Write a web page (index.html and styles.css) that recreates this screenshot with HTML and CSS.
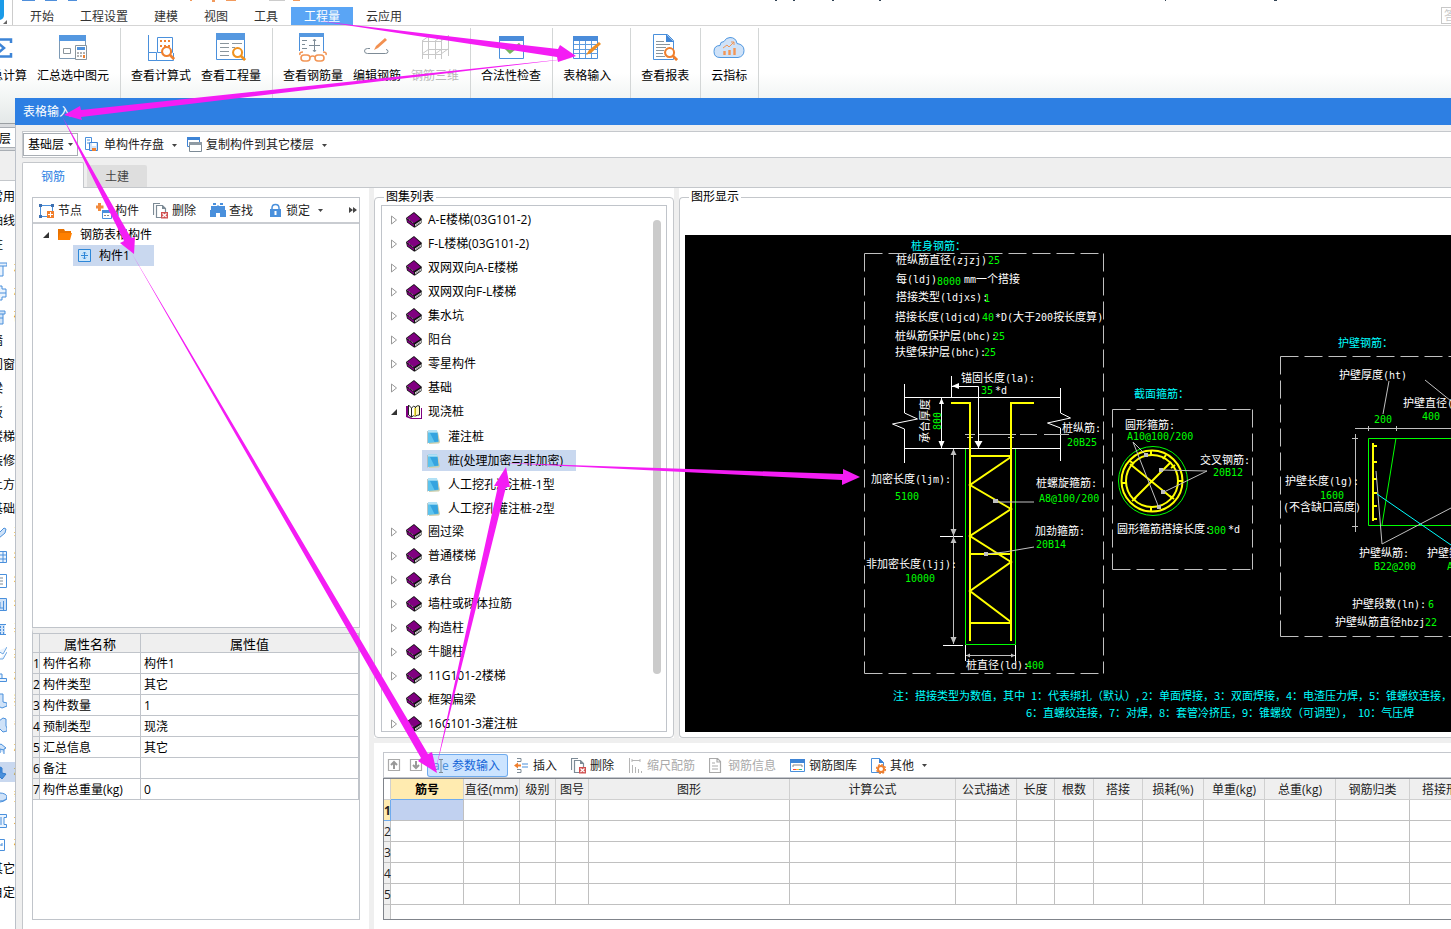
FILE: index.html
```html
<!DOCTYPE html>
<html lang="zh-CN">
<head>
  <meta charset="UTF-8">
  <meta name="viewport" content="width=device-width, initial-scale=1.0">
  <title>表格输入</title>
  <link rel="stylesheet" href="styles.css">
</head>
<body>
  <!-- Shared icons -->
  <svg class="defs" width="0" height="0" aria-hidden="true">
    <symbol id="i-book" viewBox="0 0 16 16">
      <path d="M0 6L8 0l8 7-.5 1v3L9 15.500H8L1 10.500z" fill="#111"/>
      <path d="M1 6l7-5 6.500 6L8 11z" fill="#800080"/>
      <path d="M1 7.500l7 5v2L1.500 10z" fill="#800080"/>
      <path d="M9 12.500L15 8.500v2l-6 4z" fill="#f2f2f2"/>
      <path d="M1.500 6.500L8 11.500" stroke="#e0b0e0" stroke-width=".8" stroke-dasharray="1 1" fill="none"/>
      <path d="M9.500 13.500l5-3.500" stroke="#555" stroke-width=".7" fill="none"/>
    </symbol>
    <symbol id="i-open" viewBox="0 0 16 16">
      <path d="M0 2h2v10l4 2h9V4h1v11H5l-5-2z" fill="#800080"/>
      <path d="M2.500 1l3 3v9l-3-2z" fill="#fff" stroke="#222"/>
      <path d="M5.500 4q2-3 4-1v9q-2-1-4 1z" fill="#fff" stroke="#222"/>
      <path d="M9.500 3q2-2 4-1v9q-2 0-4 1z" fill="#fffbc0" stroke="#222"/>
      <path d="M9 4v8" stroke="#f5e020" stroke-width="1.500"/>
    </symbol>
    <symbol id="i-page" viewBox="0 0 16 16">
      <path d="M3 3h9l2 10-1 1.500L3 15z" fill="#cfcfae"/>
      <path d="M2 1.500h9l1.500 11.500-10.500 1z" fill="#5cc3ee"/>
      <path d="M4 4h7.500l1 8.500-4 .5z" fill="#35a4df"/>
      <path d="M2 1.500h9l.5 2H2z" fill="#b4e2f5"/>
      <path d="M1.500 2v12.500" stroke="#a8b8b8" stroke-width=".8"/>
    </symbol>
    <symbol id="i-shut" viewBox="0 0 8 10"><path d="M1.500 1v8l5-4z" fill="#fff" stroke="#999"/></symbol>
    <symbol id="i-expand" viewBox="0 0 8 10"><path d="M7 2v6H1z" fill="#333"/></symbol>
    <symbol id="i-caret" viewBox="0 0 7 5"><path d="M1 1h5L3.500 4z" fill="#444"/></symbol>
    <symbol id="i-delete" viewBox="0 0 16 16">
      <path d="M.5 12V.5H7" fill="none" stroke="#7d8b96" stroke-width="1.200"/>
      <path d="M3.500 2.500h6l3 3V14.500h-9z" fill="#fff" stroke="#7d8b96" stroke-width="1.200"/>
      <path d="M9 2v4h4z" fill="#7d8b96"/>
      <path d="M8 9h7v6.500H8z" fill="#d05050"/>
      <path d="M9.500 10.500l4 3.500m0-3.500l-4 3.500" stroke="#fff" stroke-width="1.200"/>
    </symbol>
    <symbol id="i-magnify" viewBox="0 0 16 16">
      <path d="M10 10l5 5" stroke="currentColor" stroke-width="3"/>
      <circle cx="7" cy="7" r="4.800" fill="#fff" stroke="currentColor" stroke-width="2.200"/>
    </symbol>
    <symbol id="i-arrow-up" viewBox="0 0 16 16">
      <path d="M2.500 2.500h11v11h-11z" fill="none" stroke="#aaa" stroke-width="1.200"/>
      <path d="M8 12V5M5 8l3-3 3 3" fill="none" stroke="#999" stroke-width="2"/>
    </symbol>
  </svg>

  <!-- Ribbon tabs -->
  <header class="topbar">
    <svg class="quick" width="1300" height="26" aria-hidden="true">
      <path d="M0 0h4v15q0 4-4 5z" fill="#1b9be8"/>
      <path d="M7 20v4H3z" fill="#666"/>
      <path d="M12.500 0v25" stroke="#ccc"/>
      <path d="M22 0h13v1H22zM45 0h12v1H45zM68 0h9v1h-9z" fill="#4f8fdb"/>
      <path d="M190 0h2v1h-2zM212 0h3v2h-3zM226 0h10v1h-10zM293 0h7v1h-7z" fill="#f29a5c"/>
      <path d="M269 0h16v1h-16z" fill="#ccc"/>
      <path d="M775 0h2v1h-2zM793 0h2v1h-2zM832 0h2v1h-2zM879 0h2v1h-2zM1165 0h1v1h-1zM1274 0h3v1h-3z" fill="#345"/>
    </svg>
    <nav class="menu">
      <a href="#">开始</a>
      <a href="#">工程设置</a>
      <a href="#">建模</a>
      <a href="#">视图</a>
      <a href="#">工具</a>
      <a href="#" class="active">工程量</a>
      <a href="#">云应用</a>
    </nav>
    <input class="help-search" type="text" placeholder="答疑" aria-label="答疑">
  </header>

  <!-- Ribbon buttons -->
  <div class="ribbon">
    <div class="group first">
      <button class="tool">
        <svg width="32" height="32" viewBox="0 0 32 32"><path d="M24 12V8.500H7l10 8.500-10 8.500h17V22" fill="none" stroke="#3d84d6" stroke-width="2.500"/></svg>
        汇总计算
      </button>
      <button class="tool">
        <svg width="32" height="32" viewBox="0 0 32 32">
          <path d="M2.500 4.500h26v23h-26z" fill="#fff" stroke="#7d9ab5"/><path d="M2 4h27v6H2z" fill="#5598e0"/>
          <path d="M6.500 17.500h7v5h-7z" fill="none" stroke="#8a959c"/>
          <path d="M18.500 14.500h11v14h-11z" fill="#fff" stroke="#8a959c"/><path d="M20 16h8v3h-8z" fill="#4f92dc"/>
          <path d="M20 22h8M20 25h8" stroke="#666" stroke-dasharray="2 1"/><path d="M26 24h2v3h-2z" fill="#ee8030"/>
        </svg>
        汇总选中图元
      </button>
    </div>
    <div class="group">
      <button class="tool">
        <svg width="32" height="32" viewBox="0 0 32 32">
          <path d="M3.500 4v25.500h25V22" fill="none" stroke="#4a90dc"/><path d="M3.500 21.500h8v8h-8z" fill="#fff" stroke="#4a90dc"/>
          <path d="M12.500 6.500h15v15h-15z" fill="#fff" stroke="#4a90dc"/><path d="M15 10h11M15 15h11" stroke="#f08030" stroke-width="2" stroke-dasharray="2 2"/>
          <use href="#i-magnify" x="15" y="14" width="15" height="15" color="#f07f2d"/>
        </svg>
        查看计算式
      </button>
      <button class="tool">
        <svg width="32" height="32" viewBox="0 0 32 32">
          <path d="M1.500 2.500h28v26h-28z" fill="#fff" stroke="#4a90dc"/><path d="M1 2h29v7H1z" fill="#5598e0"/>
          <path d="M5 12.500h9M5 16.500h9M5 20.500h9M5 24.500h9M17 12.500h10M17 16.500h3" stroke="#8a959c"/>
          <use href="#i-magnify" x="16" y="15" width="15" height="15" color="#f0921e"/>
        </svg>
        查看工程量
      </button>
    </div>
    <div class="group">
      <button class="tool">
        <svg width="32" height="32" viewBox="0 0 32 32">
          <path d="M2.500 20V2.500h24V20" fill="#fff" stroke="#4a90dc"/><path d="M2 2h25v4H2z" fill="#5598e0"/>
          <path d="M5 9.500h5M5 13.500h3M5 17.500h5M17.500 9v11M12 14.500h11M16 10l1.500-2 1.500 2M16 19l1.500 2 1.500-2" fill="none" stroke="#7d8b96"/>
          <path d="M3 24q-1-3 3-3M29 24q1-3-3-3" fill="none" stroke="#f29555" stroke-width="1.600"/>
          <rect x="4" y="24" width="9" height="6" rx="3" fill="#fff" stroke="#f29555" stroke-width="1.600"/><rect x="18" y="24" width="9" height="6" rx="3" fill="#fff" stroke="#f29555" stroke-width="1.600"/>
          <path d="M13 26q3-2 5 0" fill="none" stroke="#f29555" stroke-width="1.600"/>
        </svg>
        查看钢筋量
      </button>
      <button class="tool">
        <svg width="32" height="32" viewBox="0 0 32 32">
          <path d="M9 17.500H6.500q-3 0-3 2.500t3 2.500h18q2.500 0 2.500-2t-2-2" fill="none" stroke="#7d8b96"/>
          <path d="M13 19l2-4 9-8 2 2-9 8z" fill="#f29050"/>
        </svg>
        编辑钢筋
      </button>
      <button class="tool" disabled>
        <svg width="32" height="32" viewBox="0 0 32 32">
          <path d="M3.500 28V10M9.500 28V6M16.500 28V10M22.500 28V6M29.500 25V4M3 10.500h20M10 5.500h20M3 23.500h20M10 18.500h20M3 10l7-5M16 10l7-5M22 10l7-5M3 23l7-5M16 23l7-5M22 23l7-5" fill="none" stroke="#c8c8c8"/>
        </svg>
        钢筋三维
      </button>
    </div>
    <div class="group">
      <button class="tool">
        <svg width="32" height="32" viewBox="0 0 32 32">
          <path d="M4.500 5.500h24v22h-24z" fill="#fff" stroke="#4a90dc"/><path d="M4 5h25v5H4z" fill="#4a8cda"/>
          <path d="M10 16l5 5 10-8" fill="none" stroke="#76b35c" stroke-width="3"/>
        </svg>
        合法性检查
      </button>
    </div>
    <div class="group wide">
      <button class="tool">
        <svg width="32" height="32" viewBox="0 0 32 32">
          <path d="M2.500 5.500h24v22h-24z" fill="#fff" stroke="#4a90dc"/><path d="M2 5h25v5H2z" fill="#4a8cda"/>
          <path d="M3 13.500h24M3 18.500h24M3 22.500h24M8.500 10v17M14.500 10v17M20.500 10v17" stroke="#5f9de0"/>
          <path d="M15 24l3-5 10-8 2 2-10 9z" fill="#ee8f25"/>
        </svg>
        表格输入
      </button>
    </div>
    <div class="group">
      <button class="tool">
        <svg width="32" height="32" viewBox="0 0 32 32">
          <path d="M4.500 3.500h14l6 6v19h-20z" fill="#fff" stroke="#4a90dc"/><path d="M17 3v8h8z" fill="#3f86d8"/>
          <path d="M7 10.500h8M7 13.500h14M7 16.500h10M7 19.500h8M7 22.500h7M7 25.500h9" stroke="#8a959c"/>
          <use href="#i-magnify" x="14" y="15" width="15" height="15" color="#f07f2d"/>
        </svg>
        查看报表
      </button>
    </div>
    <div class="group">
      <button class="tool">
        <svg width="32" height="32" viewBox="0 0 32 32">
          <path d="M7 26.500q-6 0-6-6t6-6q0-4 4-4 2-4 6-4 6 0 7 6 7 1 7 7t-6 7z" fill="#cfe2f8" stroke="#4f97e0"/>
          <path d="M11.500 20v4M16.500 19v5M21.500 17v7" stroke="#f29555" stroke-width="2.400"/><path d="M10 17l4-3 2 2 5-5M18 11h3v3" fill="none" stroke="#f29555"/>
        </svg>
        云指标
      </button>
    </div>
  </div>

  <div class="main">
    <!-- Component navigator, mostly covered by the window -->
    <aside class="sidebar">
      <div class="side-ribbon"></div>
      <div class="side-floor"><span>层</span></div>
      <div class="side-gap"></div>
      <ul class="side-list">
        <li>常用</li>
        <li>轴线</li>
        <li>柱</li>
        <li><svg width="16" height="16"><path d="M2 2h14v3H2zM5 5v10h7V5" fill="#eaf3fd" stroke="#4a90dc"/></svg><span>柱</span></li>
        <li><svg width="16" height="16"><path d="M4 1h7v3h4v8h-4v3H4zM8 2v12M4 8h11" fill="#eaf3fd" stroke="#4a90dc"/></svg><span>构造柱</span></li>
        <li><svg width="16" height="16"><path d="M2 2h12v3H2zM5 5v10h7V5M8 7v7M5 9h7" fill="#d3e5f8" stroke="#4a90dc"/></svg><span>砌体柱</span></li>
        <li>墙</li>
        <li>门窗</li>
        <li>梁</li>
        <li>板</li>
        <li>楼梯</li>
        <li>装修</li>
        <li>土方</li>
        <li>基础</li>
        <li><svg width="16" height="16"><path d="M5 11l8-8 2 1-1 4-6 5z" fill="#cfe2f8" stroke="#4a90dc"/></svg><span>基础梁</span></li>
        <li><svg width="16" height="16"><path d="M2 2.500h13.500v11H2zM2 6h13M2 10h13M8.500 3v10M12 3v10" fill="#eaf3fd" stroke="#4a90dc"/></svg><span>筏板基础</span></li>
        <li><svg width="16" height="16"><path d="M2 1.500h13.500v13H2z" fill="#fff" stroke="#4a90dc"/><path d="M12 5H9M12 8H7M12 11H9" stroke="#7d8b96"/></svg><span>筏板主筋</span></li>
        <li><svg width="16" height="16"><path d="M2 1.500h13.500v12H2zM12.500 4v10M9 5v6M6 11h6" fill="#cfe2f8" stroke="#4a90dc"/></svg><span>筏板负筋</span></li>
        <li><svg width="16" height="16"><path d="M2 4h12v9H2z" fill="#cfe2f8"/><path d="M2 3.500h13M2 13.500h13" stroke="#4a90dc"/><path d="M12.500 5v8M9.500 5v8" stroke="#4a90dc" stroke-dasharray="2 1"/></svg><span>基础板带</span></li>
        <li><svg width="16" height="16"><path d="M7 6l5 3 4-7M8 14h4l4-7" fill="#eaf3fd" stroke="#6fa7e2"/></svg><span>集水坑</span></li>
        <li><svg width="16" height="16"><path d="M4 9.500h11.500v3H4zM8 9V5h3v4" fill="#eaf3fd" stroke="#4a90dc"/></svg><span>柱墩</span></li>
        <li><svg width="16" height="16"><path d="M8 1h4v8l4 1v3l-5 2-6-3" fill="#cfe2f8" stroke="#4a90dc"/></svg><span>独立基础</span></li>
        <li><svg width="16" height="16"><path d="M8 4l4-3 3 1v7l1 2v3l-4 1-5-5" fill="#cfe2f8" stroke="#4a90dc"/></svg><span>条形基础</span></li>
        <li><svg width="16" height="16"><path d="M6 5l4-2 5 4-2 1v5M9 12V8l4 1" fill="#cfe2f8" stroke="#4a90dc"/></svg><span>桩承台</span></li>
        <li class="current"><svg width="16" height="16"><path d="M9 2l2 1v5l4 1-4 5-4-4 2-2z" fill="#4a90dc" stroke="#2f79cc"/></svg><span>桩</span></li>
        <li><svg width="16" height="16"><ellipse cx="9" cy="8" rx="7" ry="4" fill="#cfe2f8" stroke="#4a90dc"/><path d="M2 8v2q7 6 14 0V8" fill="none" stroke="#4a90dc"/></svg><span>垫层</span></li>
        <li><svg width="16" height="16"><path d="M4 1.500h11.500v3H13v7h2.500v3H4M10 4v8" fill="#eaf3fd" stroke="#4a90dc"/></svg><span>地沟</span></li>
        <li><svg width="16" height="16"><path d="M2 2.500h11.500v11H2zM6 8h5M11 6v3" fill="#fff" stroke="#4a90dc"/></svg><span>砖胎膜</span></li>
        <li>其它</li>
        <li>自定义</li>
      </ul>
    </aside>

    <section class="window">
      <h1 class="titlebar">表格输入</h1>
      <div class="window-body">
        <div class="toolbar top-tools">
          <select class="floor" aria-label="楼层"><option>基础层</option></select>
          <button class="btn drop">
            <svg width="16" height="16"><path d="M5 12.500H.5V.5h6V5M2 3h3M2 6h2" fill="none" stroke="#4a90dc"/><path d="M4.500 5.500h8v8h-8z" fill="#cfe2f8" stroke="#3d84d6"/><path d="M7 6h4v3H7z" fill="#fff"/><path d="M7 11h4v3H7z" fill="#ee8030"/></svg>
            单构件存盘
            <svg class="caret" width="7" height="5"><use href="#i-caret"/></svg>
          </button>
          <button class="btn drop">
            <svg width="16" height="16"><path d="M.5.500h12v9H.5z" fill="#fff" stroke="#3d84d6"/><path d="M0 0h13v3H0z" fill="#3d84d6"/><path d="M2.500 5.500h12v9h-12z" fill="#fff" stroke="#7d8b96"/><path d="M2 5h13v3H2z" fill="#8f9ba4"/></svg>
            复制构件到其它楼层
            <svg class="caret" width="7" height="5"><use href="#i-caret"/></svg>
          </button>
        </div>

        <div class="tabs">
          <button class="tab active">钢筋</button>
          <button class="tab">土建</button>
        </div>

        <div class="workspace">
          <!-- Component tree and properties -->
          <div class="left">
            <div class="box tree">
              <div class="toolbar">
                <button class="btn"><svg width="16" height="16"><path d="M1.500 2.500h12v11h-12z" fill="#fff" stroke="#4a90dc"/><path d="M0 1h3v3H0zM12 1h3v3h-3zM0 12h3v3H0z" fill="#3d6fb0"/><path d="M8 8h7v7H8z" fill="#f07f2d"/><path d="M11.500 9v5M9 11.500h5" stroke="#fff"/></svg>节点</button>
                <button class="btn"><svg width="16" height="16"><path d="M3.500 0v8M0 4h7.500" stroke="#f28a3c" stroke-width="3"/><path d="M6.500 7.500h9v8h-9z" fill="#fff" stroke="#4a90dc"/><path d="M6 7h10v3H6z" fill="#4a90dc"/><path d="M8 12.500h6" stroke="#888" stroke-dasharray="2 1"/></svg>构件</button>
                <button class="btn"><svg width="16" height="16"><use href="#i-delete"/></svg>删除</button>
                <button class="btn"><svg width="16" height="16"><path d="M3 0h3v2H3zM10 0h3v2h-3zM1 3h14v4H1zM0 7h6v7H0zM10 7h6v7h-6zM6 6h4v4H6z" fill="#4a90dc"/><path d="M8 2v2" stroke="#4a90dc"/></svg>查找</button>
                <button class="btn drop"><svg width="16" height="16"><path d="M5 7V5q0-3.500 3.500-3.500T12 5v2" fill="none" stroke="#4a90dc" stroke-width="1.500"/><path d="M3 6h11v8H3z" fill="#4a90dc"/><path d="M8.500 8v4" stroke="#fff" stroke-width="2"/></svg>锁定<svg class="caret" width="7" height="5"><use href="#i-caret"/></svg></button>
                <button class="more" aria-label="更多"><svg width="8" height="6"><path d="M0 0l4 3-4 3zM4 0l4 3-4 3z" fill="#444"/></svg></button>
              </div>
              <ul class="parts">
                <li><svg width="8" height="10"><use href="#i-expand"/></svg><svg width="16" height="16"><path d="M1 2h6l1 2h6v2H4l-2 7H1z" fill="#e87200"/><path d="M3 6h12l-2 7H1z" fill="#ff8000"/></svg>钢筋表格构件</li>
                <li class="picked"><svg width="14" height="14"><path d="M.5.500h12v12H.5z" fill="#cce6fa" stroke="#2d87d8"/><path d="M6.500 3v7M3 6.500h7M5 4.500L6.500 3 8 4.500M5 8.500L6.500 10 8 8.500" fill="none" stroke="#2d87d8"/></svg>构件1</li>
              </ul>
            </div>
            <div class="box props">
              <table>
                <thead><tr><th class="num"></th><th class="name">属性名称</th><th>属性值</th></tr></thead>
                <tbody>
                  <tr><td class="num">1</td><td>构件名称</td><td>构件1</td></tr>
                  <tr><td class="num">2</td><td>构件类型</td><td>其它</td></tr>
                  <tr><td class="num">3</td><td>构件数量</td><td>1</td></tr>
                  <tr><td class="num">4</td><td>预制类型</td><td>现浇</td></tr>
                  <tr><td class="num">5</td><td>汇总信息</td><td>其它</td></tr>
                  <tr><td class="num">6</td><td>备注</td><td></td></tr>
                  <tr><td class="num">7</td><td>构件总重量(kg)</td><td>0</td></tr>
                </tbody>
              </table>
            </div>
          </div>

          <div class="right">
            <div class="upper">
              <!-- Atlas list -->
              <div class="pane atlas-pane">
                <fieldset>
                  <legend>图集列表</legend>
                  <div class="atlas">
                    <ul>
                      <li><svg width="8" height="10"><use href="#i-shut"/></svg><svg width="16" height="16"><use href="#i-book"/></svg>A-E楼梯(03G101-2)</li>
                      <li><svg width="8" height="10"><use href="#i-shut"/></svg><svg width="16" height="16"><use href="#i-book"/></svg>F-L楼梯(03G101-2)</li>
                      <li><svg width="8" height="10"><use href="#i-shut"/></svg><svg width="16" height="16"><use href="#i-book"/></svg>双网双向A-E楼梯</li>
                      <li><svg width="8" height="10"><use href="#i-shut"/></svg><svg width="16" height="16"><use href="#i-book"/></svg>双网双向F-L楼梯</li>
                      <li><svg width="8" height="10"><use href="#i-shut"/></svg><svg width="16" height="16"><use href="#i-book"/></svg>集水坑</li>
                      <li><svg width="8" height="10"><use href="#i-shut"/></svg><svg width="16" height="16"><use href="#i-book"/></svg>阳台</li>
                      <li><svg width="8" height="10"><use href="#i-shut"/></svg><svg width="16" height="16"><use href="#i-book"/></svg>零星构件</li>
                      <li><svg width="8" height="10"><use href="#i-shut"/></svg><svg width="16" height="16"><use href="#i-book"/></svg>基础</li>
                      <li><svg width="8" height="10"><use href="#i-expand"/></svg><svg width="16" height="16"><use href="#i-open"/></svg>现浇桩</li>
                      <li class="child"><span><svg width="16" height="16"><use href="#i-page"/></svg>灌注桩</span></li>
                      <li class="child picked"><span><svg width="16" height="16"><use href="#i-page"/></svg>桩(处理加密与非加密)</span></li>
                      <li class="child"><span><svg width="16" height="16"><use href="#i-page"/></svg>人工挖孔灌注桩-1型</span></li>
                      <li class="child"><span><svg width="16" height="16"><use href="#i-page"/></svg>人工挖孔灌注桩-2型</span></li>
                      <li><svg width="8" height="10"><use href="#i-shut"/></svg><svg width="16" height="16"><use href="#i-book"/></svg>圈过梁</li>
                      <li><svg width="8" height="10"><use href="#i-shut"/></svg><svg width="16" height="16"><use href="#i-book"/></svg>普通楼梯</li>
                      <li><svg width="8" height="10"><use href="#i-shut"/></svg><svg width="16" height="16"><use href="#i-book"/></svg>承台</li>
                      <li><svg width="8" height="10"><use href="#i-shut"/></svg><svg width="16" height="16"><use href="#i-book"/></svg>墙柱或砌体拉筋</li>
                      <li><svg width="8" height="10"><use href="#i-shut"/></svg><svg width="16" height="16"><use href="#i-book"/></svg>构造柱</li>
                      <li><svg width="8" height="10"><use href="#i-shut"/></svg><svg width="16" height="16"><use href="#i-book"/></svg>牛腿柱</li>
                      <li><svg width="8" height="10"><use href="#i-shut"/></svg><svg width="16" height="16"><use href="#i-book"/></svg>11G101-2楼梯</li>
                      <li><svg width="8" height="10"></svg><svg width="16" height="16"><use href="#i-book"/></svg>框架扁梁</li>
                      <li><svg width="8" height="10"><use href="#i-shut"/></svg><svg width="16" height="16"><use href="#i-book"/></svg>16G101-3灌注桩</li>
                    </ul>
                    <div class="scrollbar"></div>
                  </div>
                </fieldset>
              </div>

              <!-- Drawing -->
              <div class="pane view-pane">
                <fieldset>
                  <legend>图形显示</legend>
                  <div class="canvas">
                    <svg class="cad" width="766" height="497" viewBox="685 235 766 497">
                      <!-- frames -->
                      <g class="frame">
                        <path d="M864.500 253.500h239M864.500 673.500h239M864.500 253.500v420M1103.500 253.500v420"/>
                        <path d="M1112.500 409.500h140M1112.500 569.500h140M1112.500 409.500v160M1252.500 409.500v160"/>
                        <path d="M1280.500 356.500h171M1280.500 636.500h171M1280.500 356.500v280"/>
                      </g>

                      <!-- pile cap -->
                      <g class="w">
                        <path d="M904.500 384v29l13 6-25 5 12 5v34M1060.500 388v25l10 5-23 5 13 5v33M904 397.500h157M904 448.500h157"/>
                        <path d="M951.500 376v21M952 386.500h26.500V448M941.500 398v50M940 536.500h23M943 645.500h20M965.500 645v16M1015.500 645v16"/>
                      </g>
                      <path fill="#fff" d="M952 386l7-3v6zM978.500 448l-4-7h8zM941.500 398l-2.500 6h5zM941.500 448l-3-7h6z"/>
                      <path class="g" d="M965.500 449v195.500h50V449"/>
                      <g class="s">
                        <path d="M953.500 449v195M966 655.500h49M965 434.500h10M1006 434.500h10M967 437.500h6M1008 437.500h6"/>
                        <path d="M979 434.500h90" stroke-dasharray="27 14 17 7"/>
                      </g>
                      <path fill="#c0c0c0" d="M953.500 449l-3 6h6zM953.500 536l-3-7h6zM953.500 537l-3 6h6zM953.500 644l-3-7h6zM966 655.500l4-2v4zM1015 655.500l-4-2v4z"/>
                      <g class="y">
                        <path d="M951 403h19v238M1034 403h-23v238M970 456h41M970 554h41M970 623h41"/>
                        <path d="M1011 457l-41 28 41 24-41 27 41 26-41 29 41 31"/>
                      </g>
                      <path class="s" d="M996 502h38M986 554l19-2 29-5"/>
                      <path fill="#c0c0c0" d="M993 499h5v4h-5zM984 552h4v4h-4z"/>

                      <!-- cross section -->
                      <circle class="g" cx="1153" cy="481" r="34.500"/>
                      <g class="y">
                        <circle cx="1152" cy="481" r="30.500"/>
                        <circle cx="1152" cy="481" r="26"/>
                        <path d="M1130 464l42 34M1134 499l37-37"/>
                        <path d="M1151 450v5M1151 507v5M1122 483h5M1178 481h5M1130 461l4 3M1166 455l-3 4M1175 465l-4 3M1132 501l4-3M1174 499l-4-3"/>
                      </g>
                      <path class="s" d="M1147 456l-14-14 26 66M1161 470l46 1-43 21"/>
                      <path fill="#c0c0c0" d="M1144 453h4v4h-4zM1157 505h4v4h-4zM1159 468h4v4h-4zM1161 490h4v4h-4z"/>

                      <!-- casing -->
                      <path class="g" d="M1451 438.500h-82.500v87h82.500M1396 438l-14 87"/>
                      <path class="y" d="M1373 443v78"/>
                      <path class="y" d="M1374 446h3M1374 462h3M1374 479h3M1374 493h3M1374 506h3M1374 519h3"/>
                      <path class="s" d="M1355 428.500h96M1355.500 434v98M1352 438.500h6M1352 526.500h6M1368.500 426v5M1396.500 426v5M1389 381l-6 33M1425 380l26 21M1376 471l6 73 69-36"/>
                      <path class="c" d="M1377 494l74 51"/>

                      <g class="cyan">
                        <text x="911" y="250">桩身钢筋：</text>
                        <text x="1134" y="398">截面箍筋：</text>
                        <text x="1338" y="347">护壁钢筋：</text>
                        <text x="893" y="700">注：搭接类型为数值，其中<tspan x="1031">1：代表绑扎（默认）,</tspan><tspan x="1142">2：单面焊接，</tspan><tspan x="1214">3：双面焊接，</tspan><tspan x="1286">4：电渣压力焊，</tspan><tspan x="1369">5：锥螺纹连接，</tspan></text>
                        <text x="1026" y="717">6：直螺纹连接，<tspan x="1109">7：对焊，</tspan><tspan x="1159">8：套管冷挤压，</tspan><tspan x="1242">9：锥螺纹（可调型），</tspan><tspan x="1358">10：气压焊</tspan></text>
                      </g>
                      <g class="white">
                        <text x="896" y="264">桩纵筋直径<tspan>(zjzj)</tspan></text>
                        <text x="896" y="283">每<tspan>(ldj)</tspan></text>
                        <text x="964" y="283"><tspan>mm</tspan>一个搭接</text>
                        <text x="896" y="301">搭接类型<tspan>(ldjxs):</tspan></text>
                        <text x="895" y="321">搭接长度<tspan>(ldjcd)</tspan></text>
                        <text x="995" y="321"><tspan>*D(</tspan>大于<tspan>200</tspan>按长度算<tspan>)</tspan></text>
                        <text x="895" y="340">桩纵筋保护层<tspan>(bhc):</tspan></text>
                        <text x="895" y="356">扶壁保护层<tspan>(bhc):</tspan></text>
                        <text x="961" y="382">锚固长度<tspan>(la):</tspan></text>
                        <text x="995" y="394"><tspan>*d</tspan></text>
                        <text transform="translate(929 443) rotate(-90)">承台厚度</text>
                        <text x="1062" y="432">桩纵筋<tspan>:</tspan></text>
                        <text x="871" y="483">加密长度<tspan>(ljm):</tspan></text>
                        <text x="866" y="568">非加密长度<tspan>(ljj):</tspan></text>
                        <text x="1036" y="487">桩螺旋箍筋<tspan>:</tspan></text>
                        <text x="1035" y="535">加劲箍筋<tspan>:</tspan></text>
                        <text x="966" y="669">桩直径<tspan>(ld):</tspan></text>
                        <text x="1125" y="429">圆形箍筋<tspan>:</tspan></text>
                        <text x="1200" y="464">交叉钢筋<tspan>:</tspan></text>
                        <text x="1117" y="533">圆形箍筋搭接长度<tspan>:</tspan></text>
                        <text x="1228" y="533"><tspan>*d</tspan></text>
                        <text x="1339" y="379">护壁厚度<tspan>(ht)</tspan></text>
                        <text x="1403" y="407">护壁直径<tspan>(hd)</tspan></text>
                        <text x="1285" y="485">护壁长度<tspan>(lg):</tspan></text>
                        <text x="1283" y="511"><tspan>(</tspan>不含缺口高度<tspan>)</tspan></text>
                        <text x="1359" y="557">护壁纵筋<tspan>:</tspan></text>
                        <text x="1427" y="557">护壁箍筋<tspan>:</tspan></text>
                        <text x="1352" y="608">护壁段数<tspan>(ln):</tspan></text>
                        <text x="1335" y="626">护壁纵筋直径<tspan>hbzj</tspan></text>
                      </g>
                      <g class="green">
                        <text x="988" y="264">25</text>
                        <text x="937" y="285">8000</text>
                        <text x="984" y="302">1</text>
                        <text x="982" y="321">40</text>
                        <text x="993" y="340">25</text>
                        <text x="984" y="356">25</text>
                        <text x="981" y="394">35</text>
                        <text transform="translate(941 430) rotate(-90)">800</text>
                        <text x="1067" y="446">20B25</text>
                        <text x="895" y="500">5100</text>
                        <text x="905" y="582">10000</text>
                        <text x="1039" y="502">A8@100/200</text>
                        <text x="1036" y="548">20B14</text>
                        <text x="1026" y="669">400</text>
                        <text x="1127" y="440">A10@100/200</text>
                        <text x="1213" y="476">20B12</text>
                        <text x="1208" y="534">300</text>
                        <text x="1374" y="423">200</text>
                        <text x="1422" y="420">400</text>
                        <text x="1320" y="499">1600</text>
                        <text x="1374" y="570">B22@200</text>
                        <text x="1447" y="570">A8@200</text>
                        <text x="1428" y="608">6</text>
                        <text x="1425" y="626">22</text>
                      </g>
                    </svg>
                  </div>
                </fieldset>
              </div>
            </div>

            <!-- Rebar table -->
            <div class="lower">
              <div class="toolbar">
                <button class="icon-btn" aria-label="上移"><svg width="16" height="16"><use href="#i-arrow-up"/></svg></button>
                <button class="icon-btn flip" aria-label="下移"><svg width="16" height="16"><use href="#i-arrow-up"/></svg></button>
                <button class="btn on"><svg width="16" height="16"><text x="0" y="12" font-size="12" fill="#4a90dc">a</text><text x="9" y="12" font-size="12" fill="#4a90dc">e</text><path d="M6 1.500h4M8 2v12M6 14.500h4" stroke="#7d8b96"/></svg>参数输入</button>
                <button class="btn"><svg width="16" height="16"><path d="M3 .5h4v3H3M3 14.500h4v-3H3" fill="none" stroke="#7d8b96"/><path d="M8 6h6M8 9h6" stroke="#4a90dc" stroke-width="1.200"/><path d="M0 7.500l4-3v2h3v2H4v2z" fill="#f07f2d"/></svg>插入</button>
                <button class="btn"><svg width="16" height="16"><use href="#i-delete"/></svg>删除</button>
                <button class="btn" disabled><svg width="16" height="16"><path d="M1.500 0v15M4 2.500h8M4 1v3M12 1v3M4.500 7v8M7.500 9v6M10.500 11v4M13.500 13v2" fill="none" stroke="#b5b5b5"/></svg>缩尺配筋</button>
                <button class="btn" disabled><svg width="16" height="16"><path d="M.5.500h8l3 3v11H.5zM8 0v4h4M3 5h3M3 8h6M3 11h6" fill="none" stroke="#aaa" stroke-width="1.200"/></svg>钢筋信息</button>
                <button class="btn"><svg width="16" height="16"><path d="M.5 1.500h14v12H.5z" fill="#fff" stroke="#4a90dc"/><path d="M0 1h15v4H0z" fill="#3d84d6"/><path d="M3 9V7h9v2" fill="none" stroke="#888"/><path d="M3 11.500h3" stroke="#f44"/><path d="M6 11.500h3" stroke="#fb3"/><path d="M9 11.500h3" stroke="#3b8"/></svg>钢筋图库</button>
                <button class="btn drop"><svg width="16" height="16"><path d="M.5.500h8l4 4v10H.5z" fill="#fff" stroke="#4a90dc"/><path d="M8 0v5h5z" fill="#3d84d6"/><circle cx="10" cy="11" r="3" fill="#fff" stroke="#f07f2d" stroke-width="2"/><circle cx="10" cy="11" r="4.500" fill="none" stroke="#f07f2d" stroke-width="1.200" stroke-dasharray="2 1.500"/></svg>其他<svg class="caret" width="7" height="5"><use href="#i-caret"/></svg></button>
              </div>
              <div class="grid">
                <table>
                  <colgroup>
                    <col class="w7"><col class="w73"><col class="w56"><col class="w36"><col class="w33"><col class="w201"><col class="w166"><col class="w61"><col class="w38"><col class="w39"><col class="w49"><col class="w61"><col class="w61"><col class="w71"><col class="w74"><col class="w73">
                  </colgroup>
                  <thead>
                    <tr><th></th><th class="here">筋号</th><th>直径(mm)</th><th>级别</th><th>图号</th><th>图形</th><th>计算公式</th><th>公式描述</th><th>长度</th><th>根数</th><th>搭接</th><th>损耗(%)</th><th>单重(kg)</th><th>总重(kg)</th><th>钢筋归类</th><th>搭接形式</th></tr>
                  </thead>
                  <tbody>
                    <tr class="here"><th>1</th><td class="cell"></td><td></td><td></td><td></td><td></td><td></td><td></td><td></td><td></td><td></td><td></td><td></td><td></td><td></td><td></td></tr>
                    <tr><th>2</th><td></td><td></td><td></td><td></td><td></td><td></td><td></td><td></td><td></td><td></td><td></td><td></td><td></td><td></td><td></td></tr>
                    <tr><th>3</th><td></td><td></td><td></td><td></td><td></td><td></td><td></td><td></td><td></td><td></td><td></td><td></td><td></td><td></td><td></td></tr>
                    <tr><th>4</th><td></td><td></td><td></td><td></td><td></td><td></td><td></td><td></td><td></td><td></td><td></td><td></td><td></td><td></td><td></td></tr>
                    <tr><th>5</th><td></td><td></td><td></td><td></td><td></td><td></td><td></td><td></td><td></td><td></td><td></td><td></td><td></td><td></td><td></td></tr>
                  </tbody>
                </table>
              </div>
            </div>
          </div>
        </div>
      </div>
    </section>
  </div>

  <!-- Step arrows over the whole screen -->
  <svg class="arrows" width="1451" height="929" aria-hidden="true">
    <path d="M319 21l239 28 2-4 16 11-18 6-1-5z"/>
    <path d="M575 58L81 110l-1-4-16 9 18 5-1-3z"/>
    <path d="M62 116l69 122 4-1-1 17-14-11 4-2z"/>
    <path d="M131 252l297 502 4-2 5 21-19-12 3-3z"/>
    <path d="M435 773l63-287h-4l12-19 4 20h-4z"/>
    <path d="M505 463l338 11v-5l17 8-18 8v-5z"/>
  </svg>
</body>
</html>
```
FILE: styles.css
```css
* {
  margin: 0;
  padding: 0;
  box-sizing: border-box;
}
body {
  display: flex;
  flex-direction: column;
  height: 100vh;
  overflow: hidden;
  position: relative;
  font-family: "Open Sans", "Noto Sans CJK SC", sans-serif;
  font-size: 12px;
  line-height: 16px;
  color: #000;
  background: #fff;
}
button, select, input {
  font: inherit;
  color: inherit;
  border: none;
  background: none;
}
button {
  white-space: nowrap;
}
ul {
  list-style: none;
}
svg {
  flex: none;
  display: block;
}
.defs, .quick, .arrows {
  position: absolute;
  top: 0;
  left: 0;
}
.arrows {
  pointer-events: none;
  fill: #f41df4;
}

/* Ribbon */
.topbar {
  display: flex;
  justify-content: space-between;
  height: 26px;
  padding: 7px 0 0 17px;
  border-bottom: 1px solid #d5d5d5;
}
.menu {
  display: flex;
}
.menu a {
  padding: 2px 13px 0;
  color: #333;
  text-decoration: none;
}
.menu a.active {
  color: #fff;
  background: #5aa5f5;
}
.help-search {
  width: 10px;
  height: 17px;
  padding-left: 2px;
  border: 1px solid #c8c8c8;
  border-right: none;
}
.help-search::placeholder {
  color: #c8c8c8;
}
.ribbon {
  display: flex;
  flex: none;
  height: 72px;
  padding-top: 2px;
  background: linear-gradient(#fff 65%, #f2f5f4);
}
.group {
  display: flex;
  padding: 0 6px 0 5px;
  border-right: 1px solid #d3d6d6;
}
.group.first {
  margin-left: -31px;
}
.group.wide {
  padding-right: 14px;
}
.tool {
  display: flex;
  flex-direction: column;
  align-items: center;
  gap: 5px;
  padding: 3px 5px 0;
}
.tool:disabled {
  color: #b8b8b8;
}

/* Left navigator */
.main {
  display: flex;
  flex: 1;
  min-height: 0;
}
.sidebar {
  display: flex;
  flex-direction: column;
  width: 15px;
  overflow: hidden;
}
.side-ribbon {
  height: 26px;
  background: linear-gradient(#f2f5f4, #e4e8e8);
  border-bottom: 1px solid #9a9fa3;
}
.side-floor {
  height: 27px;
  padding: 3px 0 2px;
  background: #d9dbde;
  border-bottom: 1px solid #a9aeb4;
}
.side-floor span {
  display: block;
  height: 21px;
  padding-top: 3px;
  margin-left: -2px;
  background: #fff;
  border: 1px solid #a9aeb4;
  border-right: none;
}
.side-gap {
  height: 30px;
  background: #efefef;
  border-bottom: 1px solid #c4c7cb;
}
.side-list {
  flex: 1;
  padding-top: 3px;
}
.side-list li {
  display: flex;
  align-items: center;
  gap: 7px;
  height: 24px;
  padding-top: 1px;
  margin-left: -9px;
  white-space: nowrap;
}
.side-list .current {
  height: 20px;
  margin-top: 2px;
  margin-bottom: 2px;
  background: #c9d8ef;
}
.side-list span {
  color: #a86a20;
}

/* Window */
.window {
  display: flex;
  flex-direction: column;
  flex: 1;
  min-width: 0;
}
.titlebar {
  height: 27px;
  padding: 6px 8px;
  font-size: 12px;
  font-weight: normal;
  line-height: 16px;
  color: #fff;
  background: #2d7fe3;
}
.window-body {
  display: flex;
  flex-direction: column;
  flex: 1;
  min-height: 0;
  padding: 6px 0 0 6px;
  background: #efefef;
  border-left: 1px solid #bcc1c9;
}
.toolbar {
  display: flex;
  gap: 2px;
  align-items: center;
  background: #fff;
}
.btn {
  display: flex;
  gap: 3px;
  align-items: center;
  height: 21px;
  padding: 1px 7px 0 5px;
  color: #222;
}
.btn.drop {
  padding-right: 2px;
}
.btn .caret {
  margin-left: 4px;
}
.btn:disabled {
  color: #aaa;
}
.btn.on {
  color: #1666d8;
  background: #cce4ff;
  box-shadow: 0 0 0 1px #6fabee;
  border-radius: 2px;
}
.top-tools {
  flex: none;
  height: 27px;
  border: 1px solid #c5c8cc;
  border-right: none;
}
.floor {
  width: 55px;
  height: 23px;
  padding: 0 4px;
  border: 1px solid #a9aeb4;
  appearance: none;
  background: url("data:image/svg+xml,%3Csvg xmlns='http://www.w3.org/2000/svg' width='5' height='3'%3E%3Cpath d='M0 0h5L2.5 3z' fill='%23444'/%3E%3C/svg%3E") no-repeat right 4px center;
}
.tabs {
  display: flex;
  flex: none;
  align-items: flex-end;
  gap: 3px;
  height: 26px;
  margin-top: 4px;
  box-shadow: inset 0 -1px #c4c7cb;
}
.tab {
  height: 22px;
  width: 60px;
  padding-top: 2px;
  margin-bottom: 1px;
  color: #444;
  background: #dedede;
  border-radius: 2px 2px 0 0;
}
.tab.active {
  width: 62px;
  height: 26px;
  margin-bottom: 0;
  color: #2d7fe3;
  background: #fff;
  border: 1px solid #c4c7cb;
  border-bottom: none;
}
.workspace {
  display: flex;
  flex: 1;
  gap: 5px;
  min-height: 0;
  border-left: 1px solid #c4c7cb;
}

/* Component tree */
.left {
  display: flex;
  flex-direction: column;
  flex: none;
  width: 346px;
  padding: 9px;
  background: #fff;
}
.box {
  border: 1px solid #c0c4ca;
}
.tree {
  flex: 1;
}
.tree .toolbar {
  height: 26px;
  padding-left: 1px;
  border-bottom: 2px solid #c9ccd1;
}
.more {
  margin-left: auto;
  padding-right: 2px;
}
.parts li {
  display: flex;
  align-items: center;
  height: 21px;
}
.parts li:first-child {
  gap: 7px;
  padding-left: 9px;
}
.parts li.picked {
  gap: 7px;
  width: 81px;
  margin-left: 40px;
  padding-left: 5px;
}
.picked, .child.picked span {
  background: #c9d8ef;
}
.child.picked {
  background: none;
}
.props {
  height: 292px;
  border-top: 5px solid #efefef;
}
.props table {
  width: 100%;
  table-layout: fixed;
  border-spacing: 0;
  border-top: 1px solid #c0c4ca;
}
.props th, .props td {
  height: 21px;
  padding: 2px 0 0 3px;
  border-right: 1px solid #c0c4ca;
  border-bottom: 1px solid #c0c4ca;
  text-align: left;
  white-space: nowrap;
}
.props th {
  height: 19px;
  padding: 1px 0 0;
  font-size: 13px;
  font-weight: normal;
  text-align: center;
  background: #efefef;
}
.props .num {
  width: 7px;
  padding-left: 0;
  background: #efefef;
}
.props .name {
  width: 101px;
}

/* Right side */
.right {
  display: flex;
  flex-direction: column;
  flex: 1;
  gap: 5px;
  min-width: 0;
}
.upper {
  display: flex;
  flex: 1;
  gap: 5px;
  min-height: 0;
}
.pane {
  display: flex;
  padding-top: 1px;
  background: #fff;
}
.pane fieldset {
  display: flex;
  flex-direction: column;
  flex: 1;
  min-width: 0;
  min-height: 0;
  padding: 0 6px 5px;
  border: 1px solid #c4c7cb;
  border-radius: 4px;
}
.pane legend {
  margin-left: 3px;
  padding: 0 2px;
}
.atlas-pane {
  flex: none;
  width: 300px;
}
.view-pane {
  flex: 1;
  min-width: 0;
}
.view-pane fieldset {
  padding: 0 0 5px 5px;
  border-right: none;
  border-radius: 4px 0 0 4px;
}
.view-pane legend {
  margin-left: 4px;
}
.atlas {
  display: flex;
  flex: 1;
  justify-content: space-between;
  min-height: 0;
  padding: 2px 5px 0 8px;
  overflow: hidden;
  border: 1px solid #c0c4ca;
}
.atlas li {
  display: flex;
  align-items: center;
  height: 24px;
}
.atlas li svg:first-child {
  margin-right: 8px;
}
.atlas li svg + svg {
  margin-right: 6px;
}
.atlas .child {
  padding-left: 32px;
}
.atlas .child span {
  display: flex;
  align-items: center;
  height: 21px;
  padding: 1px 13px 0 4px;
}
.atlas .child span svg {
  margin-right: 6px;
}
.scrollbar {
  width: 8px;
  height: 454px;
  margin-top: 12px;
  background: #cbcbcb;
  border-radius: 4px;
}

/* Drawing */
.canvas {
  flex: 1;
  min-height: 0;
  margin-top: 30px;
  overflow: hidden;
  background: #000;
}
.cad path, .cad circle {
  stroke-width: 1;
}
.cad .frame, .cad .w, .cad .s, .cad .g, .cad .y, .cad .c {
  fill: none;
}
.cad .frame {
  stroke: #c0c0c0;
  stroke-dasharray: 18 6;
}
.cad .w {
  stroke: #fff;
}
.cad .s {
  stroke: #c0c0c0;
}
.cad .g {
  stroke: #00ff00;
}
.cad .c {
  stroke: #00ffff;
}
.cad .y {
  stroke: #ffff00;
}
.cad .y, .cad .y path, .cad .y circle {
  stroke-width: 2;
}
.cad text {
  font-family: "Noto Sans CJK SC", sans-serif;
  font-size: 11px;
}
.cad .white tspan, .cad .green text {
  font-family: "DejaVu Sans Mono", monospace;
  font-size: 10px;
}
.cyan {
  fill: #00ffff;
}
.white {
  fill: #fff;
}
.green {
  fill: #00ff00;
}

/* Rebar table */
.lower {
  flex: none;
  padding: 9px 0 9px 9px;
  background: #fff;
}
.lower .toolbar {
  height: 26px;
  border: 1px solid #c4c7cd;
  border-right: none;
}
.icon-btn {
  padding: 0 2px;
}
.flip svg {
  transform: rotate(180deg);
}
.grid {
  height: 142px;
  overflow: hidden;
  border: 1px solid #80848b;
  border-right: none;
  background: linear-gradient(to right, #efefef 6px, #c0c0c0 6px, #c0c0c0 7px, #fff 7px);
}
.grid table {
  width: 1099px;
  table-layout: fixed;
  border-spacing: 0;
}
.grid th, .grid td {
  height: 21px;
  padding-top: 2px;
  border-right: 1px solid #c0c0c0;
  border-bottom: 1px solid #c0c0c0;
  font-weight: normal;
  white-space: nowrap;
  color: #222;
}
.grid td {
  background: #fff;
}
.grid thead th {
  background: #efefef;
  border-color: #d0d0d0;
}
.grid thead th:first-child {
  background: #fff;
}
.grid thead th.here {
  font-weight: bold;
  color: #000;
  background: #ffebb0;
  border-bottom: 1px solid #6fabee;
}
.grid .here th {
  font-weight: bold;
  background: #ffebb0;
  border-color: #6fabee;
}
.grid .cell {
  background: #c1d1f0;
}
.w7 { width: 7px; }
.w33 { width: 33px; }
.w36 { width: 36px; }
.w38 { width: 38px; }
.w39 { width: 39px; }
.w49 { width: 49px; }
.w56 { width: 56px; }
.w61 { width: 61px; }
.w71 { width: 71px; }
.w73 { width: 73px; }
.w74 { width: 74px; }
.w166 { width: 166px; }
.w201 { width: 201px; }
```
